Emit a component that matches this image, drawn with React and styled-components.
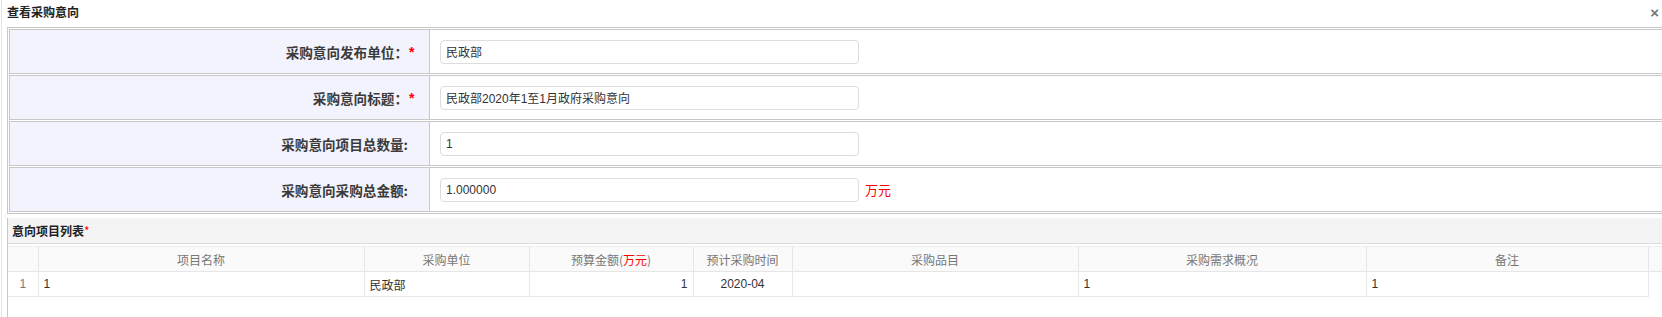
import React from 'react';
import styled, { createGlobalStyle } from 'styled-components';

const GlobalStyle = createGlobalStyle`
    html, body {
        margin: 0;
        padding: 0;
        background: #fff;
        overflow: hidden;
    }
    body {
        font-family: "Liberation Sans", "Noto Sans CJK SC", sans-serif;
        font-size: 12px;
        color: #333;
    }
`;

const Dialog = styled.div`
    width: 1661px;
    height: 317px;
    margin-left: 1px;
    border-left: 1px solid #dce5f0;
    overflow: hidden;
    box-sizing: border-box;
`;

const TitleBar = styled.div`
    height: 27px;
    display: flex;
    align-items: center;
    justify-content: space-between;
    padding: 0 3px 0 5px;
`;

const Title = styled.h3`
    margin: 0;
    font-size: 12px;
    font-weight: bold;
    color: #222;
    line-height: 14px;
    margin-top: -1px;
`;

const Close = styled.span`
    font-size: 15px;
    font-weight: bold;
    color: #777;
    line-height: 12px;
    margin-top: -2px;
    cursor: pointer;
`;

const Body = styled.div`
    padding-left: 5px;
    margin-right: -40px;
`;

const FormTable = styled.div`
    display: grid;
    grid-template-columns: 421px 1fr;
    row-gap: 1px;
    border: 1px solid #c8c8c8;
    padding: 1px;
    background: #fff;
`;

const LabelCell = styled.div`
    height: 45px;
    box-sizing: border-box;
    border: 1px solid #c8c8c8;
    background: #f3f3fd;
    display: flex;
    align-items: center;
    justify-content: flex-end;
    padding-right: 10px;
`;

const Label = styled.span`
    font-family: "Noto Sans CJK SC", sans-serif;
    font-size: 13.6px;
    font-weight: bold;
    color: #3a3a3a;
    line-height: 16px;
`;

const Required = styled.span`
    display: inline-block;
    width: 10px;
    margin-left: 1px;
    color: #f00;
    font-size: 14px;
    font-weight: bold;
    line-height: 16px;
`;

const ValueCell = styled.div`
    height: 45px;
    box-sizing: border-box;
    border: 1px solid #c8c8c8;
    border-left: none;
    display: flex;
    align-items: center;
    padding-left: 10px;
    gap: 6px;
`;

const Input = styled.div`
    width: 419px;
    height: 24px;
    box-sizing: border-box;
    border: 1px solid #ddd;
    border-radius: 4px;
    padding: 0 5px;
    display: flex;
    align-items: center;
    font-size: 12px;
    color: #333;
    font-family: "Liberation Sans", "Noto Sans CJK SC", sans-serif;
    background: #fff;
`;

const Unit = styled.span`
    color: #f00;
    font-family: "Noto Sans CJK SC", sans-serif;
    font-size: 13px;
    line-height: 16px;
`;

const Section = styled.div`
    margin-top: 4px;
    border-left: 1px solid #c8c8c8;
    height: 120px;
`;

const SectionHeader = styled.div`
    height: 26px;
    box-sizing: border-box;
    background: #f4f4f4;
    border-bottom: 1px solid #ddd;
    display: flex;
    align-items: center;
    padding-left: 4px;
    font-family: "Noto Sans CJK SC", sans-serif;
    font-size: 12px;
    font-weight: bold;
    color: #222;
`;

const Star = styled.span`
    color: #f00;
    font-weight: normal;
`;

const Grid = styled.table`
    margin-top: 2px;
    border-collapse: collapse;
    table-layout: fixed;
    width: 1700px;
    font-family: "Liberation Sans", "Noto Sans CJK SC", sans-serif;
    font-size: 12px;
`;

const Th = styled.th`
    height: 25px;
    padding: 0 4px;
    box-sizing: border-box;
    background: #fafafa;
    border-right: 1px solid #e6e6e6;
    border-bottom: 1px solid #e6e6e6;
    border-top: 1px solid #eee;
    font-weight: normal;
    color: #777;
    font-family: "Noto Sans CJK SC", sans-serif;
    text-align: center;
    white-space: nowrap;
    overflow: hidden;
`;

const Red = styled.span`
    color: #f00;
`;

const Td = styled.td`
    height: 25px;
    padding: 0 5px;
    box-sizing: border-box;
    border-right: 1px solid #e8e8e8;
    border-bottom: 1px solid #e8e8e8;
    color: ${(p) => (p.$muted ? '#777' : '#333')};
    text-align: ${(p) => p.$align || 'left'};
    white-space: nowrap;
    overflow: hidden;
`;

const EmptyTd = styled.td`
    border: none;
`;

const formRows = [
    { label: '采购意向发布单位：', required: true, value: '民政部' },
    { label: '采购意向标题：', required: true, value: '民政部2020年1至1月政府采购意向' },
    { label: '采购意向项目总数量:', required: false, value: '1' },
    { label: '采购意向采购总金额:', required: false, value: '1.000000', unit: '万元' },
];

const columns = [
    { key: 'no', width: 30, title: '' },
    { key: 'name', width: 326, title: '项目名称' },
    { key: 'unit', width: 165, title: '采购单位' },
    { key: 'budget', width: 164, title: <>预算金额(<Red>万元</Red>)</> },
    { key: 'time', width: 99, title: '预计采购时间' },
    { key: 'item', width: 286, title: '采购品目' },
    { key: 'need', width: 288, title: '采购需求概况' },
    { key: 'remark', width: 282, title: '备注' },
];

export default function App() {
    return (
        <>
            <GlobalStyle />
            <Dialog>
                <TitleBar>
                    <Title>查看采购意向</Title>
                    <Close>×</Close>
                </TitleBar>

                <Body>
                    <FormTable>
                        {formRows.map((row) => (
                            <React.Fragment key={row.label}>
                                <LabelCell>
                                    <Label>{row.label}</Label>
                                    <Required>{row.required ? '*' : ''}</Required>
                                </LabelCell>
                                <ValueCell>
                                    <Input>{row.value}</Input>
                                    {row.unit && <Unit>{row.unit}</Unit>}
                                </ValueCell>
                            </React.Fragment>
                        ))}
                    </FormTable>

                    <Section>
                        <SectionHeader>
                            意向项目列表<Star>*</Star>
                        </SectionHeader>
                        <Grid>
                            <colgroup>
                                {columns.map((c) => (
                                    <col key={c.key} style={{ width: c.width }} />
                                ))}
                                <col />
                            </colgroup>
                            <thead>
                                <tr>
                                    {columns.map((c) => (
                                        <Th key={c.key}>{c.title}</Th>
                                    ))}
                                    <Th />
                                </tr>
                            </thead>
                            <tbody>
                                <tr>
                                    <Td $align="center" $muted>1</Td>
                                    <Td>1</Td>
                                    <Td>民政部</Td>
                                    <Td $align="right">1</Td>
                                    <Td $align="center">2020-04</Td>
                                    <Td></Td>
                                    <Td>1</Td>
                                    <Td>1</Td>
                                    <EmptyTd />
                                </tr>
                            </tbody>
                        </Grid>
                    </Section>
                </Body>
            </Dialog>
        </>
    );
}
